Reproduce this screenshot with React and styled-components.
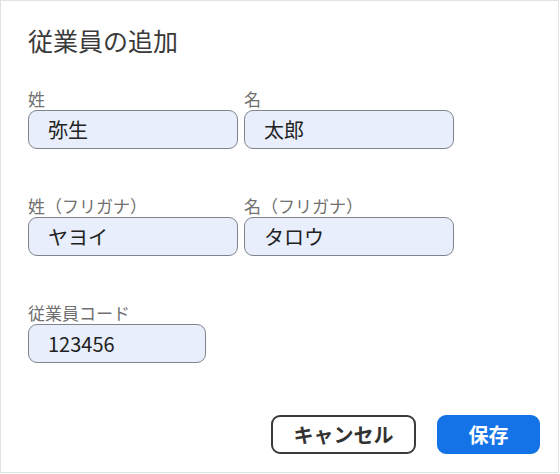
import React from 'react';
import styled, { createGlobalStyle } from 'styled-components';

const GlobalStyle = createGlobalStyle`
  html, body {
    margin: 0;
    padding: 0;
    background: #fff;
  }
  body {
    font-family: "Noto Sans CJK JP", "Noto Sans", sans-serif;
  }
`;

const Dialog = styled.div`
  box-sizing: border-box;
  width: 559px;
  height: 473px;
  border: 1px solid #e2e2e2;
  padding: 23px 18px 0 27px;
  display: flex;
  flex-direction: column;
`;

const Title = styled.h2`
  margin: 0 0 32px;
  font-size: 25px;
  line-height: 32px;
  font-weight: 400;
  color: #3a3a3a;
`;

const Fields = styled.div`
  display: flex;
  flex-direction: column;
  gap: 46px;
`;

const Row = styled.div`
  display: flex;
  gap: 6px;
`;

const Field = styled.label`
  display: flex;
  flex-direction: column;
`;

const Label = styled.span`
  font-size: 17px;
  line-height: 22px;
  color: #707070;
  white-space: nowrap;
`;

const Input = styled.input`
  box-sizing: border-box;
  width: ${props => props.$width || 210}px;
  height: 39px;
  border: 1.5px solid #80858d;
  border-radius: 9px;
  background: #e8eefb;
  padding: 0 0 0 19px;
  font-family: inherit;
  font-size: 20px;
  color: #222;
  outline: none;
`;

const Footer = styled.div`
  display: flex;
  justify-content: flex-end;
  gap: 21px;
  margin-top: 52px;
`;

const Button = styled.button`
  box-sizing: border-box;
  height: 39px;
  border-radius: 9px;
  font-family: inherit;
  font-size: 20px;
  font-weight: 700;
  cursor: pointer;
  padding: 0;
  width: ${props => props.$width}px;
  border: ${props => (props.$primary ? '2px solid #1473e6' : '2px solid #3a3a3a')};
  background: ${props => (props.$primary ? '#1473e6' : '#fff')};
  color: ${props => (props.$primary ? '#fff' : '#333')};
`;

const rows = [
  [
    { label: '姓', value: '弥生' },
    { label: '名', value: '太郎' },
  ],
  [
    { label: '姓（フリガナ）', value: 'ヤヨイ' },
    { label: '名（フリガナ）', value: 'タロウ' },
  ],
  [{ label: '従業員コード', value: '123456', width: 178 }],
];

export default function App() {
  return (
    <>
      <GlobalStyle />
      <Dialog>
        <Title>従業員の追加</Title>
        <Fields>
          {rows.map((row, i) => (
            <Row key={i}>
              {row.map(f => (
                <Field key={f.label}>
                  <Label>{f.label}</Label>
                  <Input defaultValue={f.value} $width={f.width} />
                </Field>
              ))}
            </Row>
          ))}
        </Fields>
        <Footer>
          <Button $width={145}>キャンセル</Button>
          <Button $primary $width={103}>保存</Button>
        </Footer>
      </Dialog>
    </>
  );
}
